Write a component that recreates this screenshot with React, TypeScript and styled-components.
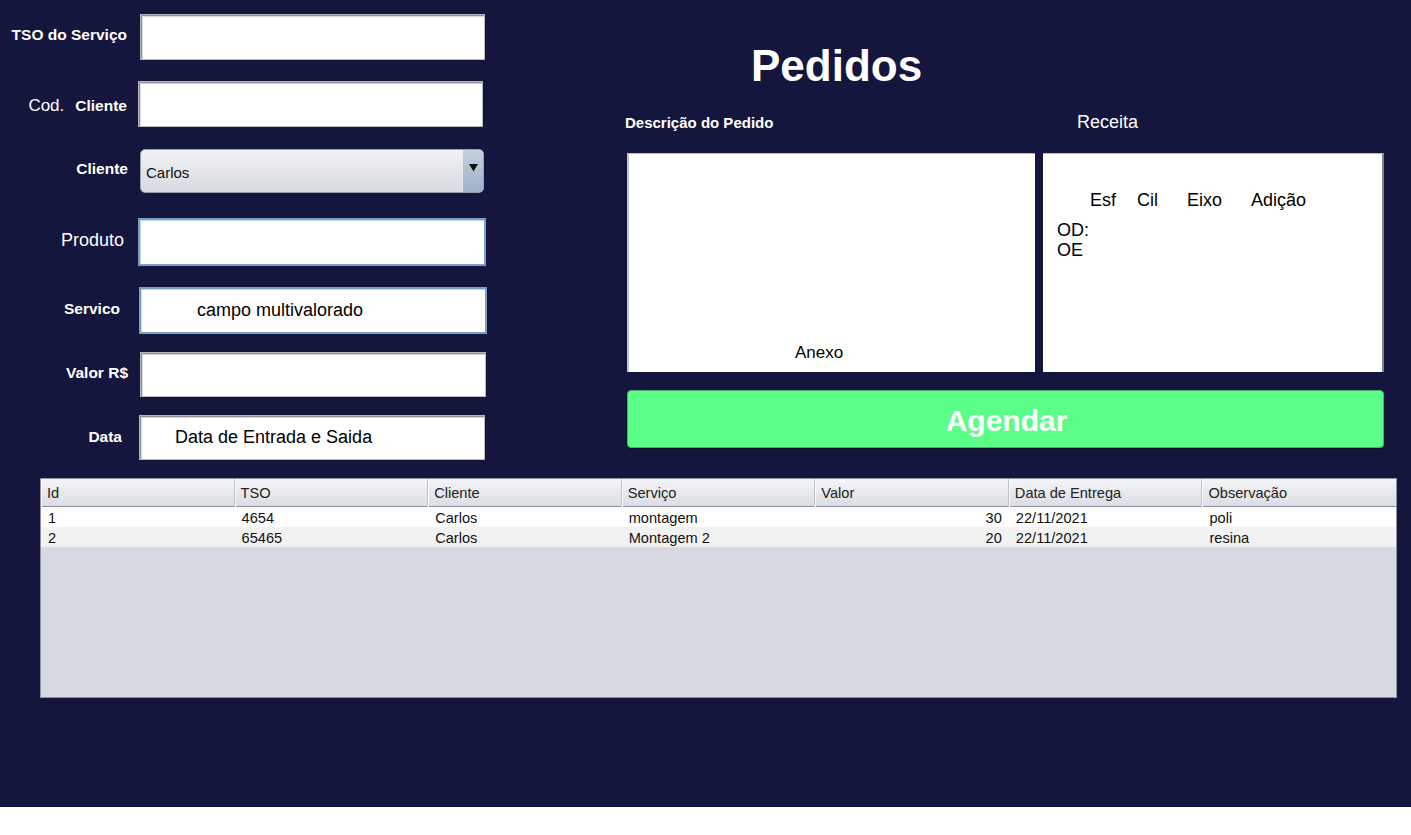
import styled, { createGlobalStyle } from "styled-components";

const GlobalStyle = createGlobalStyle`
  body {
    margin: 0;
    background: #ffffff;
    font-family: "Liberation Sans", Arial, sans-serif;
  }
`;

const Frame = styled.div`
  width: 1411px;
  height: 807px;
  background: #14163d;
  display: flex;
  flex-direction: column;
`;

const Top = styled.div`
  display: flex;
`;

const Form = styled.div`
  width: 625px;
  display: flex;
  flex-direction: column;
`;

const Row = styled.div<{ $top: number; $h: number }>`
  display: flex;
  align-items: center;
  margin-top: ${(p) => p.$top}px;
  height: ${(p) => p.$h}px;
`;

const Label = styled.div<{ $pr: number; $lift: number }>`
  box-sizing: border-box;
  width: 128px;
  padding-right: ${(p) => p.$pr}px;
  margin-bottom: ${(p) => p.$lift}px;
  display: flex;
  justify-content: flex-end;
  align-items: baseline;
  gap: 11px;
  color: #ffffff;
  font-size: 15.5px;
  font-weight: bold;
  white-space: nowrap;
`;

const Plain = styled.span<{ $size?: number }>`
  font-weight: normal;
  font-size: ${(p) => p.$size ?? 18}px;
`;

const Field = styled.input<{ $w: number; $ml: number; $focus?: boolean; $indent?: number }>`
  box-sizing: border-box;
  width: ${(p) => p.$w}px;
  height: 100%;
  margin: 0 0 0 ${(p) => p.$ml}px;
  padding: 0 0 0 ${(p) => p.$indent ?? 6}px;
  background: #ffffff;
  border: ${(p) => (p.$focus ? "2px solid #7b9cc4" : "1px solid #b4b7be")};
  box-shadow: ${(p) =>
    p.$focus
      ? "inset 1px 1px 0 #c9d6e6"
      : "inset 1px 1px 0 #8e9199, inset 2px 2px 0 #d6d8dc"};
  font-family: "Liberation Sans", Arial, sans-serif;
  font-size: 18px;
  color: #000000;
  outline: none;
`;

const Combo = styled.div<{ $w: number; $ml: number }>`
  box-sizing: border-box;
  width: ${(p) => p.$w}px;
  height: 100%;
  margin-left: ${(p) => p.$ml}px;
  display: flex;
  border: 1px solid #9aa0ad;
  border-radius: 5px;
  overflow: hidden;
  background: linear-gradient(#f1f2f5, #d6d9df);
`;

const ComboText = styled.div`
  flex: 1;
  display: flex;
  align-items: center;
  padding: 3px 0 0 5px;
  font-size: 15px;
  color: #111111;
`;

const ComboArrow = styled.div`
  width: 20px;
  display: flex;
  align-items: flex-start;
  justify-content: center;
  padding-top: 13px;
  border-left: 1px solid #e6ebf2;
  background: linear-gradient(#c3d0de, #9fb2c7);
`;

const Side = styled.div`
  width: 759px;
  padding-top: 41px;
  display: flex;
  flex-direction: column;
`;

const Title = styled.h1`
  margin: 0;
  padding-left: 126px;
  height: 50px;
  line-height: 50px;
  font-size: 44px;
  font-weight: bold;
  color: #ffffff;
`;

const Captions = styled.div`
  display: flex;
  align-items: center;
  height: 20px;
  margin-top: 21px;
`;

const Caption = styled.div<{ $w?: number; $bold?: boolean }>`
  width: ${(p) => (p.$w ? `${p.$w}px` : "auto")};
  color: #ffffff;
  font-size: ${(p) => (p.$bold ? 15 : 18)}px;
  font-weight: ${(p) => (p.$bold ? "bold" : "normal")};
`;

const Boxes = styled.div`
  display: grid;
  grid-template-columns: 408px 341px;
  gap: 8px;
  height: 219px;
  margin: 21px 0 0 2px;
`;

const DescBox = styled.div`
  box-sizing: border-box;
  background: #ffffff;
  border-left: 2px solid #c3c6cf;
  border-top: 1px solid #b3b7c2;
  display: flex;
  flex-direction: column;
  justify-content: flex-end;
  padding: 0 0 9px 166px;
`;

const BoxText = styled.div`
  font-size: 17px;
  line-height: 20px;
  color: #000000;
`;

const RecipeBox = styled.div`
  box-sizing: border-box;
  background: #ffffff;
  border-right: 2px solid #7f8393;
  border-top: 1px solid #b3b7c2;
  padding: 36px 0 0 14px;
`;

const RecipeHead = styled.div`
  display: grid;
  grid-template-columns: 47px 50px 64px auto;
  margin-left: 33px;
  margin-bottom: 10px;
`;

const RecipeCell = styled.div`
  font-size: 18px;
  line-height: 20px;
  color: #000000;
`;

const Schedule = styled.button`
  box-sizing: border-box;
  width: 757px;
  height: 58px;
  margin: 18px 0 0 2px;
  background: #5aff87;
  border: 1px solid #52a872;
  border-radius: 4px;
  box-shadow: 0 1px 1px rgba(0, 0, 0, 0.45);
  color: #ffffff;
  font-family: "Liberation Sans", Arial, sans-serif;
  font-size: 30px;
  font-weight: bold;
  padding: 3px 0 0 2px;
`;

const Grid = styled.div`
  box-sizing: border-box;
  width: 1357px;
  height: 220px;
  margin: 18px 0 0 40px;
  border: 1px solid #8c91a3;
  background: #d6d9e1;
`;

const Columns = styled.div<{ $bg?: string }>`
  display: grid;
  grid-template-columns: repeat(7, 1fr);
  background: ${(p) => p.$bg ?? "transparent"};
`;

const HeadRow = styled(Columns)`
  height: 27px;
  border-bottom: 1px solid #8a8f9c;
  background: linear-gradient(#f4f5f7, #dadde3);
`;

const HeadCell = styled.div`
  padding-left: 6px;
  line-height: 28px;
  font-size: 14.6px;
  color: #222222;
  border-right: 1px solid #bfc2ca;
  box-shadow: inset 1px 0 0 #f7f8fa;
  &:last-child {
    border-right: none;
  }
`;

const Cell = styled.div<{ $right?: boolean }>`
  height: 20px;
  line-height: 22px;
  padding: 0 7px 0 7px;
  font-size: 14.6px;
  color: #111111;
  text-align: ${(p) => (p.$right ? "right" : "left")};
  white-space: nowrap;
`;

const fields = [
  { top: 14, h: 46, pr: 1, lift: 4, ml: 12, w: 345, label: "TSO do Serviço" },
  { top: 21, h: 46, pr: 1, lift: -3, ml: 10, w: 345, label: "Cliente", prefix: "Cod." },
  { top: 22, h: 44, pr: 0, lift: 4, ml: 12, w: 344, label: "Cliente", combo: "Carlos" },
  { top: 25, h: 48, pr: 4, lift: 4, ml: 10, w: 348, label: "Produto", plain: true, focus: true },
  { top: 21, h: 47, pr: 8, lift: 4, ml: 11, w: 348, label: "Servico", focus: true, value: "campo multivalorado", indent: 56 },
  { top: 18, h: 45, pr: 0, lift: 4, ml: 12, w: 346, label: "Valor R$" },
  { top: 18, h: 45, pr: 6, lift: 2, ml: 11, w: 346, label: "Data", value: "Data de Entrada e Saida", indent: 35 },
];

const columns = ["Id", "TSO", "Cliente", "Serviço", "Valor", "Data de Entrega", "Observação"];

const orders = [
  ["1", "4654", "Carlos", "montagem", "30", "22/11/2021", "poli"],
  ["2", "65465", "Carlos", "Montagem 2", "20", "22/11/2021", "resina"],
];

export default function App() {
  return (
    <>
      <GlobalStyle />
      <Frame>
        <Top>
          <Form>
            {fields.map((f, i) => (
              <Row key={i} $top={f.top} $h={f.h}>
                <Label $pr={f.pr} $lift={f.lift}>
                  {f.prefix && <Plain $size={17}>{f.prefix}</Plain>}
                  {f.plain ? <Plain>{f.label}</Plain> : <span>{f.label}</span>}
                </Label>
                {f.combo ? (
                  <Combo $w={f.w} $ml={f.ml}>
                    <ComboText>{f.combo}</ComboText>
                    <ComboArrow>
                      <svg width="9" height="9" viewBox="0 0 9 9">
                        <path d="M0 1h9L4.5 8.5z" fill="#111" />
                      </svg>
                    </ComboArrow>
                  </Combo>
                ) : (
                  <Field
                    $w={f.w}
                    $ml={f.ml}
                    $focus={f.focus}
                    $indent={f.indent}
                    readOnly
                    defaultValue={f.value ?? ""}
                  />
                )}
              </Row>
            ))}
          </Form>
          <Side>
            <Title>Pedidos</Title>
            <Captions>
              <Caption $w={452} $bold>
                Descrição do Pedido
              </Caption>
              <Caption>Receita</Caption>
            </Captions>
            <Boxes>
              <DescBox>
                <BoxText>Anexo</BoxText>
              </DescBox>
              <RecipeBox>
                <RecipeHead>
                  <RecipeCell>Esf</RecipeCell>
                  <RecipeCell>Cil</RecipeCell>
                  <RecipeCell>Eixo</RecipeCell>
                  <RecipeCell>Adição</RecipeCell>
                </RecipeHead>
                <RecipeCell>OD:</RecipeCell>
                <RecipeCell>OE</RecipeCell>
              </RecipeBox>
            </Boxes>
            <Schedule>Agendar</Schedule>
          </Side>
        </Top>
        <Grid>
          <HeadRow>
            {columns.map((c) => (
              <HeadCell key={c}>{c}</HeadCell>
            ))}
          </HeadRow>
          {orders.map((o, r) => (
            <Columns key={r} $bg={r % 2 ? "#f2f2f2" : "#ffffff"}>
              {o.map((v, c) => (
                <Cell key={c} $right={c === 4}>
                  {v}
                </Cell>
              ))}
            </Columns>
          ))}
        </Grid>
      </Frame>
    </>
  );
}
